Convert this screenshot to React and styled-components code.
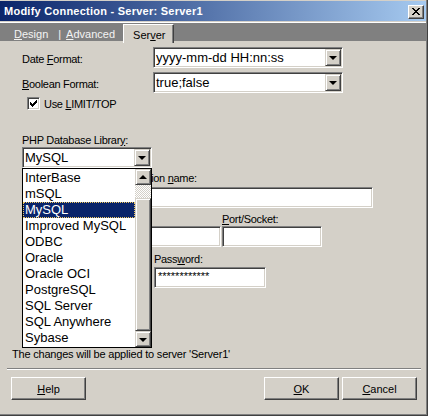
import React from 'react';
import styled, { createGlobalStyle } from 'styled-components';

const Global = createGlobalStyle`
  html, body { margin: 0; padding: 0; background: #d4d0c8; }
  body { font-family: "Liberation Sans", Arial, sans-serif; font-size: 11px; color: #000; }
  * { box-sizing: border-box; }
`;

const Window = styled.div`
  position: relative;
  width: 428px;
  height: 416px;
  background: #d4d0c8;
  display: flex;
  flex-direction: column;
  padding: 1px 2px 2px 0;
  box-shadow: inset -1px -1px #404040, inset -2px -2px #808080;
  overflow: hidden;
`;

const TitleBar = styled.div`
  height: 20px;
  display: flex;
  align-items: center;
  justify-content: space-between;
  padding: 0 2px 0 4px;
  background: linear-gradient(to right, #0a246a, #a6caf0);
  color: #fff;
  font-weight: bold;
  font-size: 11px;
  letter-spacing: 0.25px;
`;

const CloseBtn = styled.div`
  width: 16px;
  height: 14px;
  display: flex;
  align-items: center;
  justify-content: center;
  background: #d4d0c8;
  border: 1px solid;
  border-color: #fff #404040 #404040 #fff;
  box-shadow: inset -1px -1px #808080;
  margin-top: 1px;
`;

const TabStrip = styled.div`
  margin-top: 1px;
  border-top: 1px solid #fff;
  height: 19px;
  background: #808080;
  display: flex;
  align-items: flex-start;
  padding-left: 14px;
`;

const TabLabel = styled.span`
  color: #f4f4f4;
  padding-top: 5px;
  line-height: 13px;
  margin-right: ${p => p.$mr || 0}px;
`;

const ActiveTab = styled.div`
  margin-top: 1px;
  height: 19px;
  padding: 4px 8px 0 9px;
  line-height: 13px;
  background: #d4d0c8;
  border-top: 1px solid #fff;
  border-left: 1px solid #fff;
  border-right: 1px solid #404040;
  box-shadow: inset -1px 0 #808080;
`;

const U = styled.span`
  text-decoration: underline;
  text-underline-offset: 1px;
`;

const Form = styled.div`
  display: flex;
  flex-direction: column;
  padding: 6px 0 0 22px;
  letter-spacing: -0.3px;
`;

const FieldRow = styled.div`
  display: flex;
  align-items: flex-start;
  margin-top: ${p => p.$mt || 0}px;
`;

const RowLabel = styled.div`
  width: 131px;
  line-height: 13px;
  margin-top: 6px;
`;

const Sunken = styled.div`
  position: relative;
  display: flex;
  align-items: center;
  width: ${p => p.$w}px;
  height: 21px;
  padding: 1px;
  background: #fff;
  border: 1px solid;
  border-color: #808080 #fff #fff #808080;
  box-shadow: inset 1px 1px #404040, inset -1px -1px #d4d0c8;
  margin-top: ${p => p.$mt || 0}px;
  letter-spacing: 0;
`;

const ComboText = styled.span`
  flex: 1;
  font-size: 13px;
  padding-left: 1px;
  line-height: 17px;
  white-space: nowrap;
`;

const Raised = styled.div`
  width: 16px;
  height: ${p => p.$h || 17}px;
  flex: none;
  display: flex;
  align-items: center;
  justify-content: center;
  background: #d4d0c8;
  border: 1px solid;
  border-color: #d4d0c8 #404040 #404040 #d4d0c8;
  box-shadow: inset 1px 1px #fff, inset -1px -1px #808080;
`;

const Arrow = styled.span`
  width: 0;
  height: 0;
  border-left: 4px solid transparent;
  border-right: 4px solid transparent;
  ${p => (p.$up ? 'border-bottom: 4px solid #000;' : 'border-top: 4px solid #000;')}
  margin-top: ${p => (p.$up ? -1 : 1)}px;
`;

const CheckRow = styled.div`
  display: flex;
  align-items: center;
  gap: 4px;
  margin: 4px 0 0 5px;
  height: 13px;
`;

const CheckBox = styled.div`
  width: 13px;
  height: 13px;
  background: #fff;
  border: 1px solid;
  border-color: #808080 #fff #fff #808080;
  box-shadow: inset 1px 1px #404040, inset -1px -1px #d4d0c8;
  display: flex;
  align-items: center;
  justify-content: center;
`;

const Label = styled.div`
  height: 13px;
  line-height: 13px;
  width: ${p => (p.$w ? `${p.$w}px` : 'auto')};
  margin-top: ${p => p.$mt || 0}px;
  white-space: nowrap;
`;

const Pair = styled.div`
  display: flex;
  gap: ${p => p.$gap}px;
  margin-top: ${p => p.$mt || 0}px;
`;

const Col = styled.div`
  display: flex;
  flex-direction: column;
`;

const ComboWrap = styled.div`
  position: relative;
  width: 130px;
`;

const ListBox = styled.div`
  position: absolute;
  top: 21px;
  left: 0;
  width: 130px;
  height: 180px;
  border: 1px solid #000;
  background: #fff;
  display: flex;
  z-index: 2;
  letter-spacing: 0;
`;

const Items = styled.div`
  flex: 1;
  padding-top: 1px;
  display: flex;
  flex-direction: column;
`;

const Item = styled.div`
  height: 16px;
  line-height: 16px;
  font-size: 13px;
  padding-left: 2px;
  white-space: nowrap;
  background: ${p => (p.$sel ? '#0a246a' : 'transparent')};
  color: ${p => (p.$sel ? '#fff' : '#000')};
  outline: ${p => (p.$sel ? '1px dotted #f0c860' : 'none')};
  outline-offset: -1px;
`;

const ScrollBar = styled.div`
  width: 16px;
  display: flex;
  flex-direction: column;
`;

const Track = styled.div`
  flex: 1;
  display: flex;
  flex-direction: column;
  background-color: #d4d0c8;
  background-image: repeating-conic-gradient(#ffffff 0 25%, #d4d0c8 0 50%);
  background-size: 2px 2px;
`;

const Thumb = styled.div`
  flex: 1;
  margin-top: 13px;
  background: #d4d0c8;
  border: 1px solid;
  border-color: #d4d0c8 #404040 #404040 #d4d0c8;
  box-shadow: inset 1px 1px #fff, inset -1px -1px #808080;
`;

const Password = styled.span`
  font-size: 11px;
  padding-left: 2px;
  line-height: 12px;
  margin-top: -4px;
`;

const Footer = styled.div`
  margin-top: auto;
  display: flex;
  flex-direction: column;
  padding-bottom: 14px;
`;

const Note = styled.div`
  line-height: 13px;
  padding-left: 12px;
  letter-spacing: -0.2px;
`;

const Separator = styled.div`
  margin: 7px 5px 0 7px;
  border-top: 1px solid #808080;
  border-bottom: 1px solid #fff;
`;

const ButtonRow = styled.div`
  display: flex;
  justify-content: space-between;
  margin-top: 7px;
  padding: 0 9px 0 11px;
`;

const ButtonGroup = styled.div`
  display: flex;
  gap: 3px;
`;

const Button = styled.div`
  width: 75px;
  height: 23px;
  display: flex;
  align-items: center;
  justify-content: center;
  background: #d4d0c8;
  border: 1px solid;
  border-color: #fff #404040 #404040 #fff;
  box-shadow: inset -1px -1px #808080;
`;

const Combo = ({ w, text, mt }) => (
  <Sunken $w={w} $mt={mt}>
    <ComboText>{text}</ComboText>
    <Raised>
      <Arrow />
    </Raised>
  </Sunken>
);

const libs = [
  'InterBase',
  'mSQL',
  'MySQL',
  'Improved MySQL',
  'ODBC',
  'Oracle',
  'Oracle OCI',
  'PostgreSQL',
  'SQL Server',
  'SQL Anywhere',
  'Sybase',
];

export default function App() {
  return (
    <>
      <Global />
      <Window>
        <TitleBar>
          <span>Modify Connection - Server: Server1</span>
          <CloseBtn>
            <svg width="8" height="7" viewBox="0 0 8 7" shapeRendering="crispEdges">
              <path
                fill="#000"
                d="M0 0h2v1h-2z M6 0h2v1h-2z M1 1h2v1h-2z M5 1h2v1h-2z M2 2h4v1h-4z M3 3h2v1h-2z M2 4h4v1h-4z M1 5h2v1h-2z M5 5h2v1h-2z M0 6h2v1h-2z M6 6h2v1h-2z"
              />
            </svg>
          </CloseBtn>
        </TitleBar>
        <TabStrip>
          <TabLabel $mr={10}>
            <U>D</U>esign
          </TabLabel>
          <TabLabel $mr={5}>|</TabLabel>
          <TabLabel $mr={8}>
            <U>A</U>dvanced
          </TabLabel>
          <ActiveTab>
            Ser<U>v</U>er
          </ActiveTab>
        </TabStrip>
        <Form>
          <FieldRow>
            <RowLabel>
              Date <U>F</U>ormat:
            </RowLabel>
            <Combo w={190} text="yyyy-mm-dd HH:nn:ss" />
          </FieldRow>
          <FieldRow $mt={4}>
            <RowLabel>
              <U>B</U>oolean Format:
            </RowLabel>
            <Combo w={190} text="true;false" />
          </FieldRow>
          <CheckRow>
            <CheckBox>
              <svg width="7" height="7" viewBox="0 0 7 7" shapeRendering="crispEdges">
                <path
                  fill="#000"
                  d="M6 0h1v1h-1z M5 1h2v1h-2z M0 2h1v1h-1z M4 2h3v1h-3z M0 3h2v1h-2z M3 3h3v1h-3z M0 4h5v1h-5z M1 5h3v1h-3z M2 6h1v1h-1z"
                />
              </svg>
            </CheckBox>
            <span>
              Use <U>L</U>IMIT/TOP
            </span>
          </CheckRow>
          <Label $mt={24}>
            PHP Database Librar<U>y</U>:
          </Label>
          <ComboWrap>
            <Combo w={130} text="MySQL" />
            <ListBox>
              <Items>
                {libs.map(l => (
                  <Item key={l} $sel={l === 'MySQL'}>
                    {l}
                  </Item>
                ))}
              </Items>
              <ScrollBar>
                <Raised $h={16}>
                  <Arrow $up />
                </Raised>
                <Track>
                  <Thumb />
                </Track>
                <Raised $h={16}>
                  <Arrow />
                </Raised>
              </ScrollBar>
            </ListBox>
          </ComboWrap>
          <Label $mt={4}>
            Database or ODBC connection <U>n</U>ame:
          </Label>
          <Sunken $w={351} $mt={2} />
          <Pair $gap={1} $mt={5}>
            <Col>
              <Label $w={199} />
              <Sunken $w={199} />
            </Col>
            <Col>
              <Label $w={100}>
                <U>P</U>ort/Socket:
              </Label>
              <Sunken $w={100} />
            </Col>
          </Pair>
          <Pair $gap={2} $mt={6}>
            <Col>
              <Label $w={130} />
              <Sunken $w={130} $mt={1} />
            </Col>
            <Col>
              <Label $w={112}>
                Pass<U>w</U>ord:
              </Label>
              <Sunken $w={112} $mt={1}>
                <Password>************</Password>
              </Sunken>
            </Col>
          </Pair>
        </Form>
        <Footer>
          <Note>The changes will be applied to server 'Server1'</Note>
          <Separator />
          <ButtonRow>
            <Button>
              <U>H</U>elp
            </Button>
            <ButtonGroup>
              <Button>
                <U>O</U>K
              </Button>
              <Button>
                <U>C</U>ancel
              </Button>
            </ButtonGroup>
          </ButtonRow>
        </Footer>
      </Window>
    </>
  );
}
